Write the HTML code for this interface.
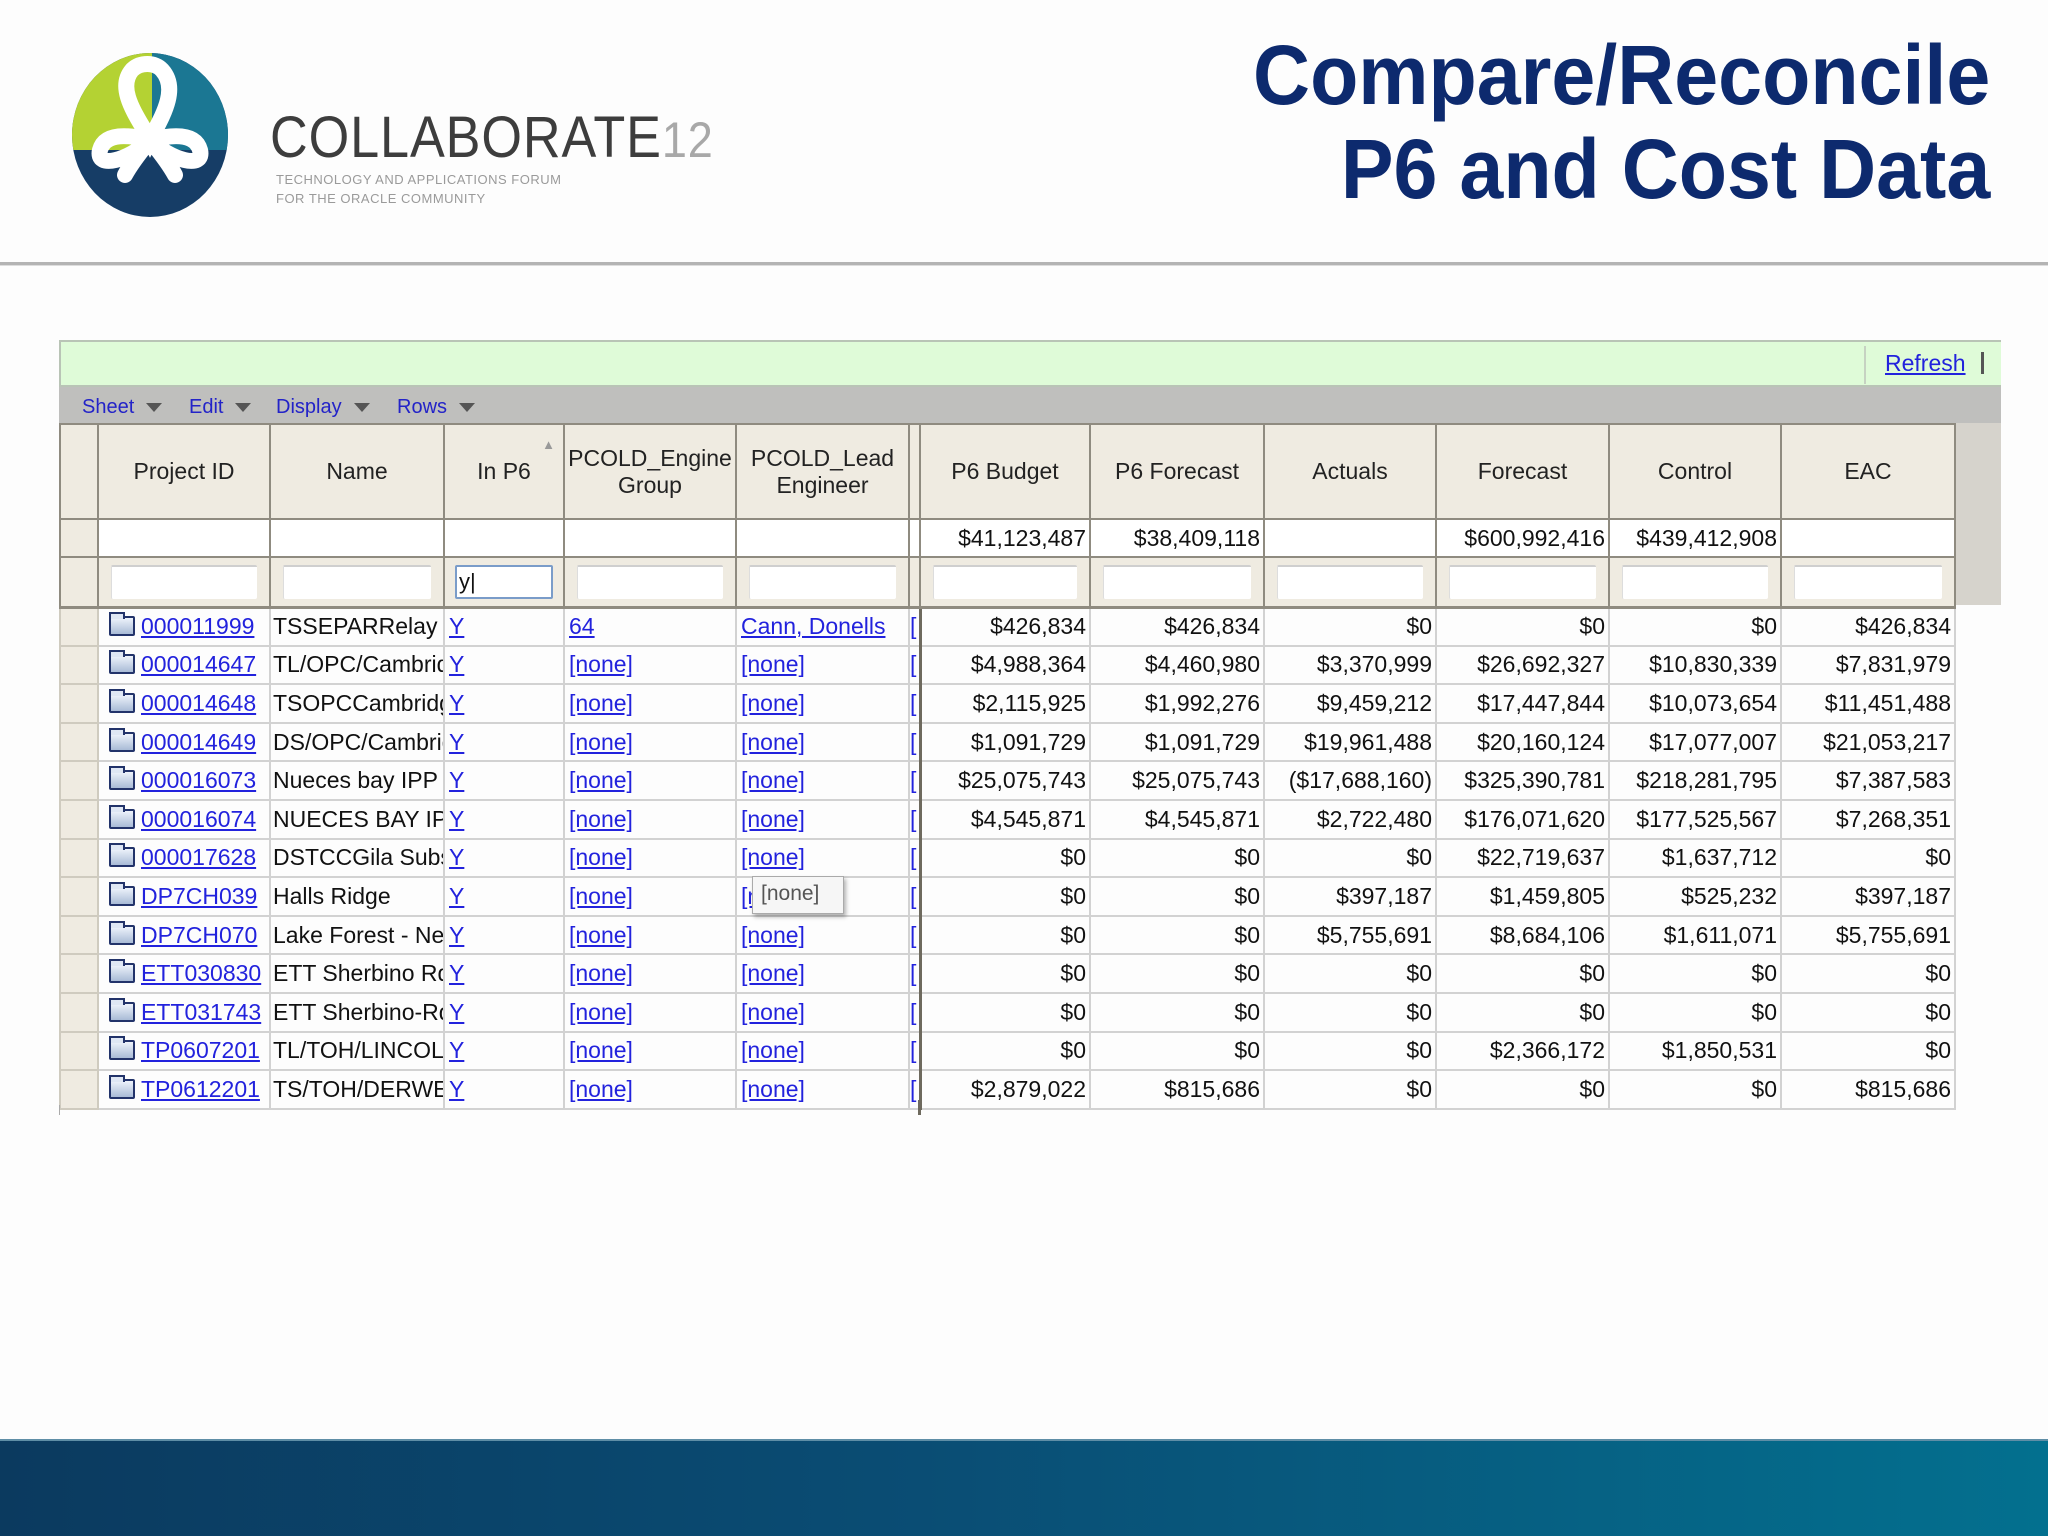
<!DOCTYPE html>
<html><head><meta charset="utf-8">
<style>
*{margin:0;padding:0;box-sizing:border-box}
body{width:2048px;height:1536px;background:#fdfdfd;position:relative;overflow:hidden;font-family:"Liberation Sans",Arial,sans-serif}
.abs{position:absolute}
.title{right:58px;top:28px;text-align:right;color:#0d2a6e;font-weight:bold;font-size:84px;line-height:94px;transform:scaleX(0.94);transform-origin:right top;white-space:nowrap}
.hr{left:0;top:262px;width:2048px;height:4px;background:#b4b4b4;border-bottom:1px solid #ddd}
.band{left:0;top:1439px;width:2048px;height:97px;background:linear-gradient(90deg,#0b3a5f 0%,#0a4d74 45%,#03708f 100%);border-top:2px solid #5f8ea6}
.green{left:59px;top:340px;width:1942px;height:47px;background:#dffbd8;border:2px solid #b9c4b6;border-right:none}
.tool{left:59px;top:387px;width:1942px;height:36px;background:#bfbfbd}
.tool span{position:absolute;top:9px;font-size:20px;color:#2323c8}
.tri{display:inline-block;width:0;height:0;border-left:8px solid transparent;border-right:8px solid transparent;border-top:9px solid #555;margin-left:12px;vertical-align:middle}
table{position:absolute;left:59px;top:423px;width:1895px;border-collapse:collapse;table-layout:fixed;font-size:23px}
td{border:2px solid #d2d2d2;white-space:nowrap;overflow:hidden;padding:0 4px;height:38.6px;color:#111}
tr.h td{background:#efebe1;border:2px solid #8f8b80;text-align:center;height:95px;font-size:23px;line-height:27px;color:#222;white-space:normal;padding:0 2px}
tr.t td{background:#fff;border:2px solid #8f8b80;height:38px;text-align:right;padding-right:3px}
tr.f td{background:#efebe1;border:2px solid #8f8b80;border-bottom:3px solid #8f8b80;height:50px;padding:0 12px}
tr.f td div{height:34px;background:#fff;border-top:2px solid #cfcfcf;border-left:1px solid #ddd;border-radius:2px}
td.rh{background:#efebe1!important;border-color:#cfcbbf}
td.n{text-align:right;padding-right:3px}
a{color:#2222dd;text-decoration:underline}
.fold{display:inline-block;width:26px;height:20px;vertical-align:-2px;margin:0 6px 0 10px;background:linear-gradient(180deg,#eef3fb,#a9bbd6);border:2px solid #22336a;border-radius:2px;position:relative}
.fold:before{content:"";position:absolute;left:-2px;top:-6px;width:12px;height:5px;border:2px solid #22336a;border-bottom:none;background:#dfe7f4}
td.sep{padding:0;border-right:3px solid #6e6a5e}
</style></head><body>

<svg class="abs" style="left:70px;top:50px" width="165" height="170" viewBox="0 0 165 170">
<defs><clipPath id="c"><ellipse cx="80" cy="85" rx="78" ry="82"/></clipPath></defs>
<g clip-path="url(#c)">
<rect x="0" y="0" width="165" height="170" fill="#163d66"/>
<rect x="0" y="0" width="82" height="100" fill="#b4d233"/>
<rect x="82" y="0" width="83" height="100" fill="#1b7793"/>
</g>
<g fill="none" stroke="#fff" stroke-width="16" stroke-linecap="round">
<path d="M62 20 C45 40 70 70 80 90 C90 70 110 40 92 20 C85 12 70 12 62 20"/>
<path d="M80 90 C60 110 25 120 30 100 C35 82 60 85 80 90"/>
<path d="M80 90 C100 110 135 120 130 100 C125 82 100 85 80 90"/>
<path d="M55 125 C62 112 72 100 80 90 C88 100 98 112 105 125"/>
</g>
</svg>
<div class="abs" style="left:270px;top:104px;font-size:58px;color:#3d3d3d;letter-spacing:1px;transform:scaleX(0.9);transform-origin:left top;white-space:nowrap">COLLABORATE<span style="color:#a8a8a8;font-size:50px">12</span></div>
<div class="abs" style="left:276px;top:170px;font-size:13px;color:#9a9a9a;line-height:19px;letter-spacing:0.5px">TECHNOLOGY AND APPLICATIONS FORUM<br>FOR THE ORACLE COMMUNITY</div>

<div class="abs title">Compare/Reconcile<br>P6 and Cost Data</div>
<div class="abs hr"></div>

<div class="abs green"></div>
<div class="abs" style="left:1864px;top:346px;width:2px;height:38px;background:#c6d2c2"></div>
<div class="abs" style="left:1885px;top:350px;font-size:23px"><a>Refresh</a></div>
<div class="abs" style="left:1981px;top:352px;width:3px;height:22px;background:#555"></div>
<div class="abs tool">
<span style="left:23px">Sheet<i class="tri"></i></span>
<span style="left:130px">Edit<i class="tri"></i></span>
<span style="left:217px">Display<i class="tri"></i></span>
<span style="left:338px">Rows<i class="tri"></i></span>
</div>
<div class="abs" style="left:1954px;top:423px;width:47px;height:182px;background:#d6d3cc"></div>

<table>
<colgroup><col style="width:38px"><col style="width:172px"><col style="width:174px"><col style="width:120px"><col style="width:172px"><col style="width:173px"><col style="width:11px"><col style="width:170px"><col style="width:174px"><col style="width:172px"><col style="width:173px"><col style="width:172px"><col style="width:174px"></colgroup>
<tr class="h"><td class="rh"></td><td>Project ID</td><td>Name</td><td style="position:relative">In P6<span style="position:absolute;right:8px;top:6px;font-size:13px;color:#999">▲</span></td><td>PCOLD_Engine Group</td><td>PCOLD_Lead Engineer</td><td class="sep"></td><td>P6 Budget</td><td>P6 Forecast</td><td>Actuals</td><td>Forecast</td><td>Control</td><td>EAC</td></tr>
<tr class="t"><td class="rh"></td><td></td><td></td><td></td><td></td><td></td><td class="sep"></td><td>$41,123,487</td><td>$38,409,118</td><td></td><td>$600,992,416</td><td>$439,412,908</td><td></td></tr>
<tr class="f"><td class="rh" style="padding:0"></td><td><div></div></td><td><div></div></td><td style="padding:0 10px 0 10px"><div style="border:2px solid #7a9cc9;font-size:22px;line-height:30px;padding-left:2px">y|</div></td><td><div></div></td><td><div></div></td><td class="sep"></td><td><div></div></td><td><div></div></td><td><div></div></td><td><div></div></td><td><div></div></td><td><div></div></td></tr>
<tr><td class="rh"></td><td style="padding:0"><i class="fold"></i><a>000011999</a></td><td style="padding:0 2px">TSSEPARRelay</td><td><a>Y</a></td><td><a>64</a></td><td><a>Cann, Donells</a></td><td class="sep"><a>[</a></td><td class="n">$426,834</td><td class="n">$426,834</td><td class="n">$0</td><td class="n">$0</td><td class="n">$0</td><td class="n">$426,834</td></tr>
<tr><td class="rh"></td><td style="padding:0"><i class="fold"></i><a>000014647</a></td><td style="padding:0 2px">TL/OPC/Cambridge</td><td><a>Y</a></td><td><a>[none]</a></td><td><a>[none]</a></td><td class="sep"><a>[</a></td><td class="n">$4,988,364</td><td class="n">$4,460,980</td><td class="n">$3,370,999</td><td class="n">$26,692,327</td><td class="n">$10,830,339</td><td class="n">$7,831,979</td></tr>
<tr><td class="rh"></td><td style="padding:0"><i class="fold"></i><a>000014648</a></td><td style="padding:0 2px">TSOPCCambridge</td><td><a>Y</a></td><td><a>[none]</a></td><td><a>[none]</a></td><td class="sep"><a>[</a></td><td class="n">$2,115,925</td><td class="n">$1,992,276</td><td class="n">$9,459,212</td><td class="n">$17,447,844</td><td class="n">$10,073,654</td><td class="n">$11,451,488</td></tr>
<tr><td class="rh"></td><td style="padding:0"><i class="fold"></i><a>000014649</a></td><td style="padding:0 2px">DS/OPC/Cambridge</td><td><a>Y</a></td><td><a>[none]</a></td><td><a>[none]</a></td><td class="sep"><a>[</a></td><td class="n">$1,091,729</td><td class="n">$1,091,729</td><td class="n">$19,961,488</td><td class="n">$20,160,124</td><td class="n">$17,077,007</td><td class="n">$21,053,217</td></tr>
<tr><td class="rh"></td><td style="padding:0"><i class="fold"></i><a>000016073</a></td><td style="padding:0 2px">Nueces bay IPP</td><td><a>Y</a></td><td><a>[none]</a></td><td><a>[none]</a></td><td class="sep"><a>[</a></td><td class="n">$25,075,743</td><td class="n">$25,075,743</td><td class="n">($17,688,160)</td><td class="n">$325,390,781</td><td class="n">$218,281,795</td><td class="n">$7,387,583</td></tr>
<tr><td class="rh"></td><td style="padding:0"><i class="fold"></i><a>000016074</a></td><td style="padding:0 2px">NUECES BAY IPP</td><td><a>Y</a></td><td><a>[none]</a></td><td><a>[none]</a></td><td class="sep"><a>[</a></td><td class="n">$4,545,871</td><td class="n">$4,545,871</td><td class="n">$2,722,480</td><td class="n">$176,071,620</td><td class="n">$177,525,567</td><td class="n">$7,268,351</td></tr>
<tr><td class="rh"></td><td style="padding:0"><i class="fold"></i><a>000017628</a></td><td style="padding:0 2px">DSTCCGila Substation</td><td><a>Y</a></td><td><a>[none]</a></td><td><a>[none]</a></td><td class="sep"><a>[</a></td><td class="n">$0</td><td class="n">$0</td><td class="n">$0</td><td class="n">$22,719,637</td><td class="n">$1,637,712</td><td class="n">$0</td></tr>
<tr><td class="rh"></td><td style="padding:0"><i class="fold"></i><a>DP7CH039</a></td><td style="padding:0 2px">Halls Ridge</td><td><a>Y</a></td><td><a>[none]</a></td><td><a>[none]</a></td><td class="sep"><a>[</a></td><td class="n">$0</td><td class="n">$0</td><td class="n">$397,187</td><td class="n">$1,459,805</td><td class="n">$525,232</td><td class="n">$397,187</td></tr>
<tr><td class="rh"></td><td style="padding:0"><i class="fold"></i><a>DP7CH070</a></td><td style="padding:0 2px">Lake Forest - New</td><td><a>Y</a></td><td><a>[none]</a></td><td><a>[none]</a></td><td class="sep"><a>[</a></td><td class="n">$0</td><td class="n">$0</td><td class="n">$5,755,691</td><td class="n">$8,684,106</td><td class="n">$1,611,071</td><td class="n">$5,755,691</td></tr>
<tr><td class="rh"></td><td style="padding:0"><i class="fold"></i><a>ETT030830</a></td><td style="padding:0 2px">ETT Sherbino Rd</td><td><a>Y</a></td><td><a>[none]</a></td><td><a>[none]</a></td><td class="sep"><a>[</a></td><td class="n">$0</td><td class="n">$0</td><td class="n">$0</td><td class="n">$0</td><td class="n">$0</td><td class="n">$0</td></tr>
<tr><td class="rh"></td><td style="padding:0"><i class="fold"></i><a>ETT031743</a></td><td style="padding:0 2px">ETT Sherbino-Rd</td><td><a>Y</a></td><td><a>[none]</a></td><td><a>[none]</a></td><td class="sep"><a>[</a></td><td class="n">$0</td><td class="n">$0</td><td class="n">$0</td><td class="n">$0</td><td class="n">$0</td><td class="n">$0</td></tr>
<tr><td class="rh"></td><td style="padding:0"><i class="fold"></i><a>TP0607201</a></td><td style="padding:0 2px">TL/TOH/LINCOLN</td><td><a>Y</a></td><td><a>[none]</a></td><td><a>[none]</a></td><td class="sep"><a>[</a></td><td class="n">$0</td><td class="n">$0</td><td class="n">$0</td><td class="n">$2,366,172</td><td class="n">$1,850,531</td><td class="n">$0</td></tr>
<tr><td class="rh"></td><td style="padding:0"><i class="fold"></i><a>TP0612201</a></td><td style="padding:0 2px">TS/TOH/DERWENT</td><td><a>Y</a></td><td><a>[none]</a></td><td><a>[none]</a></td><td class="sep"><a>[</a></td><td class="n">$2,879,022</td><td class="n">$815,686</td><td class="n">$0</td><td class="n">$0</td><td class="n">$0</td><td class="n">$815,686</td></tr>
</table>
<div class="abs" style="left:59px;top:1105px;width:1px;height:10px;background:#aaa"></div>
<div class="abs" style="left:918px;top:1100px;width:3px;height:15px;background:#6e6a5e"></div>
<div class="abs" style="left:752px;top:876px;width:92px;height:38px;background:#f6f6f6;border:1px solid #aaa;box-shadow:2px 3px 4px rgba(0,0,0,0.3);font-size:21px;color:#555;padding:5px 8px">[none]</div>

<div class="abs band"></div>
</body></html>
